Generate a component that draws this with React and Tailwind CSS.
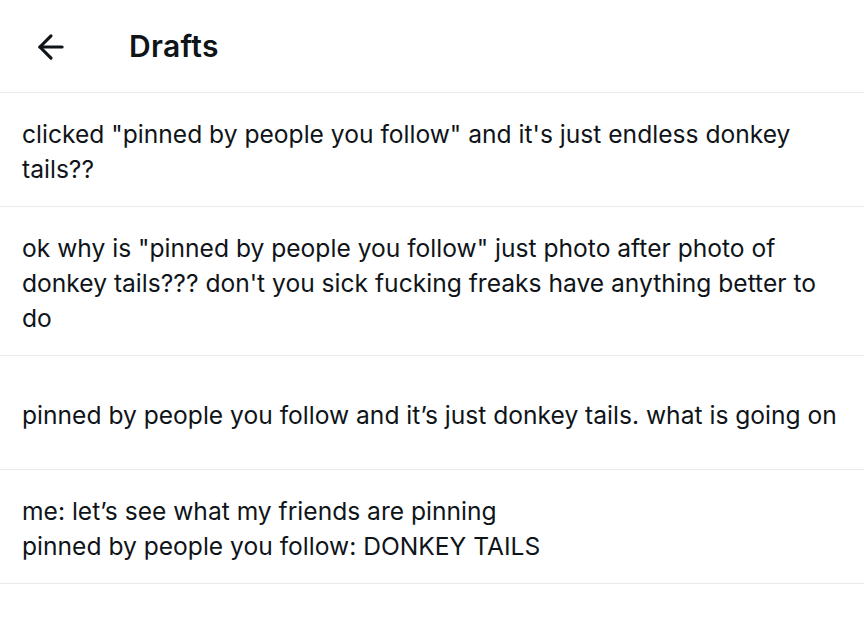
import { ArrowLeft } from 'lucide-react'

const drafts = [
  'clicked "pinned by people you follow" and it\'s just endless donkey tails??',
  'ok why is "pinned by people you follow" just photo after photo of donkey tails??? don\'t you sick fucking freaks have anything better to do',
  'pinned by people you follow and it’s just donkey tails. what is going on',
  'me: let’s see what my friends are pinning\npinned by people you follow: DONKEY TAILS',
]

export default function App() {
  return (
    <div className="w-[864px] h-[621px] bg-white text-[#0f1419] font-['Inter',sans-serif] overflow-hidden">
      <div className="h-[93px] flex items-center border-b border-[#e7ebec]">
        <div className="w-[129px] pl-[32px] pt-[2px]">
          <ArrowLeft size={38} strokeWidth={2} />
        </div>
        <h1 className="text-[30px] font-semibold tracking-[0.3px]">Drafts</h1>
      </div>

      {drafts.map((text, i) => (
        <div
          key={i}
          className="min-h-[114px] flex items-center pl-[22px] pr-[20px] pt-[24px] pb-[19px] border-b border-[#e7ebec]"
        >
          <p className="text-[24.6px] leading-[35px] whitespace-pre-line">{text}</p>
        </div>
      ))}
    </div>
  )
}
